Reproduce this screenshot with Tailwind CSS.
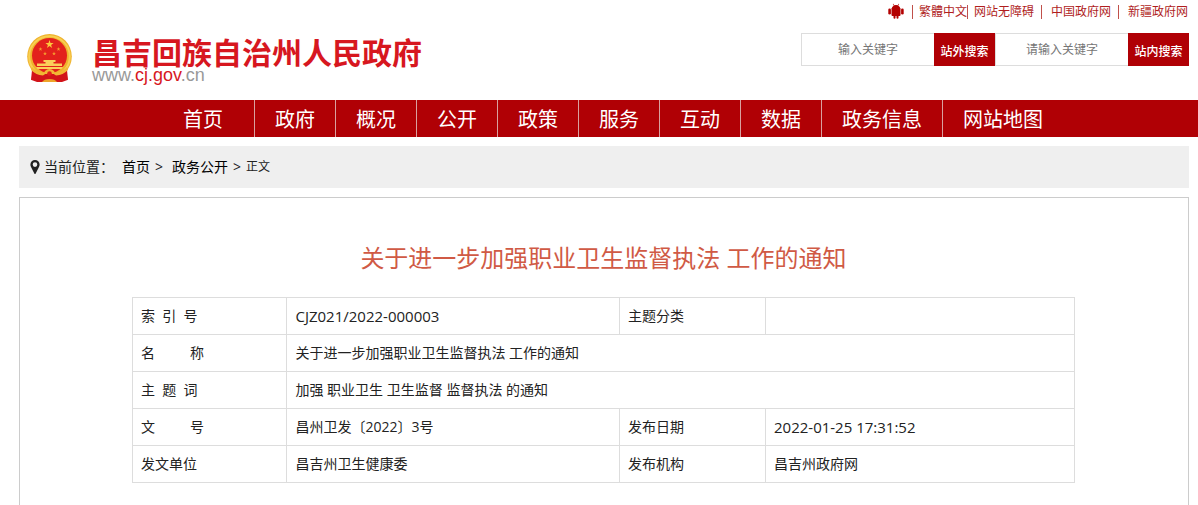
<!DOCTYPE html>
<html lang="zh-CN">
<head>
  <meta charset="UTF-8">
  <meta name="viewport" content="width=device-width, initial-scale=1.0">
  <title>关于进一步加强职业卫生监督执法 工作的通知</title>
  <script src="https://cdn.jsdelivr.net/npm/@tailwindcss/browser@4"></script>
</head>
<body class="bg-white text-[#222] text-sm font-['Open_Sans','Noto_Sans_CJK_SC',sans-serif]">

  <header class="flex justify-between h-[100px] pl-[27px] pr-[9px]">
    <a href="#" class="flex items-start gap-5 pt-[34px]">
      <svg class="w-[45px] h-12 shrink-0" viewBox="0 0 45 48" aria-hidden="true">
        <path d="M6 34 L4.500 46 L10 48 H35 L40.500 46 L39 34Z" fill="#d2141a"/>
        <ellipse cx="22.500" cy="22.500" rx="22.300" ry="22.500" fill="#efb22c"/>
        <circle cx="22.500" cy="22.500" r="20.300" fill="none" stroke="#f8cf52" stroke-width="2"/>
        <circle cx="22.500" cy="21.500" r="17.500" fill="#e3211c"/>
        <path d="M22.500 6l1 3h3.100l-2.500 1.900 1 3-2.600-1.800-2.600 1.800 1-3-2.500-1.900h3.100z" fill="#fbc93d"/>
        <path d="M13.500 13l.5 1.400h1.500l-1.200.9.400 1.400-1.200-.8-1.200.8.400-1.400-1.200-.9H13zM31.500 13l.5 1.400h1.500l-1.200.9.400 1.400-1.200-.8-1.200.8.400-1.400-1.200-.9H31zM18 17.500l.5 1.400H20l-1.200.9.400 1.400-1.200-.8-1.200.8.400-1.400-1.200-.9h1.500zM27 17.500l.5 1.400H29l-1.200.9.400 1.400-1.200-.8-1.200.8.400-1.400-1.200-.9h1.500z" fill="#f59a2e"/>
        <path d="M16.500 26h12v2h-2v1.500h8.500V32h-25v-2.500h8.500V28h-2zM9 33h27l-1.500 2h-24z" fill="#fbcf5a"/>
        <path d="M5 36q5 5 12 5 1-4 5.500-4t5.500 4q7 0 12-5l1 10-6-1-4 3H14l-4-3-6 1z" fill="#d2141a"/>
        <path d="M5 33q4 5 12 6l1-2q2-2 4.500-2t4.500 2l1 2q8-1 12-6l1 3q-5 5-12 5.500l-2-1.500H18l-2 1.500Q9 41 4 36z" fill="#f2b735"/>
        <circle cx="22.500" cy="39.500" r="2.300" fill="#e2211c"/>
        <path d="M15 48q2-3 7.500-3t7.500 3z" fill="#eda52a"/>
      </svg>
      <span class="flex flex-col pt-1">
        <span class="leading-[30px] text-[30px] font-bold text-[#d7171f] whitespace-nowrap">昌吉回族自治州人民政府</span>
        <span class="leading-[14px] text-lg text-[#999] font-['Liberation_Sans',sans-serif]">www.<span class="text-[#d7171f]">cj.gov</span>.cn</span>
      </span>
    </a>

    <div class="flex flex-col items-end text-xs">
      <div class="flex items-center h-6 pr-px text-[#b01e1e] whitespace-nowrap">
        <a href="#" aria-label="Android" class="-mt-0.5 mr-2">
          <svg class="w-4 h-4" viewBox="0 0 16 16" fill="#b30000" aria-hidden="true">
            <path d="M4.800 1l1 1.600A5 5 0 0 0 3.500 6h9a5 5 0 0 0-2.300-3.400l1-1.600-.5-.2-1 1.500a5 5 0 0 0-3.400 0l-1-1.500z"/>
            <path d="M3.500 5.500h9V12q0 1-1 1h-1v1.700a1 1 0 0 1-2 0V13h-1v1.700a1 1 0 0 1-2 0V13h-1q-1 0-1-1z"/>
            <rect x=".3" y="5.500" width="2.600" height="6" rx="1.300"/>
            <rect x="13.100" y="5.500" width="2.600" height="6" rx="1.300"/>
          </svg>
        </a>
        <span class="w-px h-3.5 mr-1.5 bg-[#c0504a]"></span>
        <a href="#">繁體中文</a>
        <span class="w-px h-3.5 mr-1.5 bg-[#c0504a]"></span>
        <a href="#">网站无障碍</a>
        <span class="w-px h-3.5 mx-[7px] mr-[9px] bg-[#c0504a]"></span>
        <a href="#">中国政府网</a>
        <span class="w-px h-3.5 mx-[7px] mr-[9px] bg-[#c0504a]"></span>
        <a href="#">新疆政府网</a>
      </div>
      <div class="flex mt-[9px]">
        <form class="flex">
          <input type="text" aria-label="站外搜索" placeholder="输入关键字" class="w-[133px] h-[33px] border border-r-0 border-[#ddd] text-center placeholder:text-[#757575]">
          <button type="button" class="w-[61px] h-[33px] pt-1 bg-[#b00005] text-white font-medium">站外搜索</button>
        </form>
        <form class="flex">
          <input type="text" aria-label="站内搜索" placeholder="请输入关键字" class="w-[133px] h-[33px] border border-r-0 border-[#ddd] text-center placeholder:text-[#757575]">
          <button type="button" class="w-[61px] h-[33px] pt-1 bg-[#b00005] text-white font-medium">站内搜索</button>
        </form>
      </div>
    </div>
  </header>

  <nav class="bg-[#b00005]">
    <ul class="flex justify-center pl-7 text-white text-xl leading-[35px] whitespace-nowrap divide-x divide-[#d9a0a0]">
      <li class="pt-0.5"><a href="#" class="block pl-5 pr-[31px]">首页</a></li>
      <li class="pt-0.5"><a href="#" class="block px-5">政府</a></li>
      <li class="pt-0.5"><a href="#" class="block px-5">概况</a></li>
      <li class="pt-0.5"><a href="#" class="block px-5">公开</a></li>
      <li class="pt-0.5"><a href="#" class="block px-5">政策</a></li>
      <li class="pt-0.5"><a href="#" class="block px-5">服务</a></li>
      <li class="pt-0.5"><a href="#" class="block px-5">互动</a></li>
      <li class="pt-0.5"><a href="#" class="block px-5">数据</a></li>
      <li class="pt-0.5"><a href="#" class="block px-5">政务信息</a></li>
      <li class="pt-0.5"><a href="#" class="block px-5">网站地图</a></li>
    </ul>
  </nav>

  <main class="pl-[19px] pr-[9px] pt-[9px]">
    <div class="flex items-center h-[42px] pl-[11px] bg-[#efefef]">
      <svg class="w-[10px] h-[14px] mr-1" viewBox="0 0 10 14" aria-hidden="true">
        <path fill="#222" fill-rule="evenodd" d="M5 0a4.600 4.600 0 0 1 4.600 4.600c0 1.300-.5 2.300-1 3.200L5.700 13.500q-.7 1-1.400 0L1.400 7.800c-.5-.9-1-1.900-1-3.200A4.600 4.600 0 0 1 5 0zm0 2.300a2.300 2.300 0 1 0 0 4.600 2.300 2.300 0 0 0 0-4.600z"/>
      </svg>
      <span class="mr-2">当前位置：</span>
      <a href="#" class="text-black">首页</a>
      <span class="mx-[5px]">&gt;</span>
      <a href="#" class="ml-1 text-black">政务公开</a>
      <span class="mx-[5px]">&gt;</span>
      <span class="text-xs">正文</span>
    </div>

    <article class="mt-[9px] pl-28 pr-[113px] pt-10 pb-10 border border-[#ccc]">
      <h1 class="mb-[19px] text-center text-2xl leading-10 text-[#d05a45]">关于进一步加强职业卫生监督执法 工作的通知</h1>
      <table class="w-full table-fixed border-collapse text-left leading-5 [&_th]:font-normal [&_th]:border [&_td]:border [&_th]:border-[#ddd] [&_td]:border-[#ddd] [&_th]:p-2 [&_td]:p-2">
        <colgroup>
          <col class="w-[16.4%]">
          <col class="w-[35.3%]">
          <col class="w-[15.5%]">
          <col>
        </colgroup>
        <tbody>
          <tr>
            <th scope="row" class="whitespace-pre">索&nbsp; 引&nbsp; 号</th>
            <td class="text-[15px]">CJZ021/2022-000003</td>
            <th scope="row">主题分类</th>
            <td></td>
          </tr>
          <tr>
            <th scope="row">名&emsp;&emsp;&ensp;称</th>
            <td colspan="3">关于进一步加强职业卫生监督执法 工作的通知</td>
          </tr>
          <tr>
            <th scope="row" class="whitespace-pre">主&nbsp; 题&nbsp; 词</th>
            <td colspan="3">加强 职业卫生 卫生监督 监督执法 的通知</td>
          </tr>
          <tr>
            <th scope="row">文&emsp;&emsp;&ensp;号</th>
            <td>昌州卫发〔2022〕3号</td>
            <th scope="row">发布日期</th>
            <td class="text-[15px]">2022-01-25 17:31:52</td>
          </tr>
          <tr>
            <th scope="row">发文单位</th>
            <td>昌吉州卫生健康委</td>
            <th scope="row">发布机构</th>
            <td>昌吉州政府网</td>
          </tr>
        </tbody>
      </table>
    </article>
  </main>

</body>
</html>
